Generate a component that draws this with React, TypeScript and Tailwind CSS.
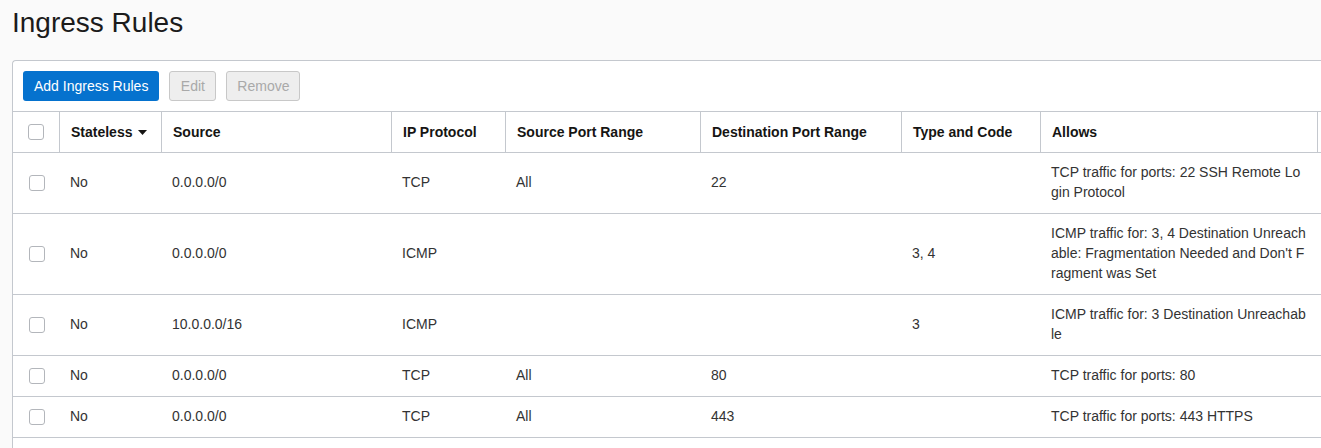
import React from "react";

type Rule = {
  stateless: string;
  source: string;
  protocol: string;
  srcPort: string;
  dstPort: string;
  typeCode: string;
  allows: string;
};

const rules: Rule[] = [
  { stateless: "No", source: "0.0.0.0/0", protocol: "TCP", srcPort: "All", dstPort: "22", typeCode: "", allows: "TCP traffic for ports: 22 SSH Remote Login Protocol" },
  { stateless: "No", source: "0.0.0.0/0", protocol: "ICMP", srcPort: "", dstPort: "", typeCode: "3, 4", allows: "ICMP traffic for: 3, 4 Destination Unreachable: Fragmentation Needed and Don't Fragment was Set" },
  { stateless: "No", source: "10.0.0.0/16", protocol: "ICMP", srcPort: "", dstPort: "", typeCode: "3", allows: "ICMP traffic for: 3 Destination Unreachable" },
  { stateless: "No", source: "0.0.0.0/0", protocol: "TCP", srcPort: "All", dstPort: "80", typeCode: "", allows: "TCP traffic for ports: 80" },
  { stateless: "No", source: "0.0.0.0/0", protocol: "TCP", srcPort: "All", dstPort: "443", typeCode: "", allows: "TCP traffic for ports: 443 HTTPS" },
];

const cols = "grid grid-cols-[47px_102px_230px_114px_195px_201px_139px_277px_1fr]";

function Checkbox() {
  return <span className="block h-4 w-4 rounded-[3px] border border-[#b3b6bb] bg-white" />;
}

function Th({ children, last }: { children?: React.ReactNode; last?: boolean }) {
  return (
    <div className={`flex items-center px-[11px] py-[10px] leading-5 font-bold text-[#161513] ${last ? "" : "border-r border-[#c4c8ce]"}`}>
      {children}
    </div>
  );
}

function Td({ children, wrap }: { children?: React.ReactNode; wrap?: boolean }) {
  return (
    <div className={`flex items-center px-[10px] pt-[9px] pb-[11px] leading-5 text-[#333333] ${wrap ? "break-all" : ""}`}>
      <span>{children}</span>
    </div>
  );
}

export default function App() {
  return (
    <div className="h-[448px] w-[1321px] overflow-hidden bg-[#fafafa] font-['Liberation_Sans',Arial,sans-serif] text-[14px]">
      <div className="h-[60px] pl-3 pt-[7px]">
        <h1 className="text-[28px] leading-8 text-[#1b1b1b]">Ingress Rules</h1>
      </div>

      <div className="ml-3 w-[1340px] rounded-tl-[4px] border-l border-t border-[#c4c8ce] bg-white">
        <div className="flex gap-[10px] p-[10px]">
          <button className="h-[30px] rounded-[3px] bg-[#0572ce] px-[11px] text-white">Add Ingress Rules</button>
          <button className="h-[30px] w-[47px] rounded-[3px] border border-[#c8c8c8] bg-[#eeeeee] text-[#a9a9a9]">Edit</button>
          <button className="h-[30px] w-[74px] rounded-[3px] border border-[#c8c8c8] bg-[#eeeeee] text-[#a9a9a9]">Remove</button>
        </div>

        <div className={`${cols} border-y border-[#c4c8ce]`}>
          <div className="flex items-center justify-center border-r border-[#c4c8ce]">
            <Checkbox />
          </div>
          <Th>
            Stateless
            <svg className="ml-[6px]" width="9" height="5" viewBox="0 0 9 5">
              <path d="M0 0h9L4.5 5z" fill="#161513" />
            </svg>
          </Th>
          <Th>Source</Th>
          <Th>IP Protocol</Th>
          <Th>Source Port Range</Th>
          <Th>Destination Port Range</Th>
          <Th>Type and Code</Th>
          <Th>Allows</Th>
          <Th last />
        </div>

        {rules.map((r, i) => (
          <div key={i} className={`${cols} border-b border-[#c4c8ce]`}>
            <div className="flex items-center justify-center">
              <Checkbox />
            </div>
            <Td>{r.stateless}</Td>
            <Td>{r.source}</Td>
            <Td>{r.protocol}</Td>
            <Td>{r.srcPort}</Td>
            <Td>{r.dstPort}</Td>
            <Td>{r.typeCode}</Td>
            <Td wrap>{r.allows}</Td>
            <Td />
          </div>
        ))}
        <div className="h-10" />
      </div>
    </div>
  );
}
